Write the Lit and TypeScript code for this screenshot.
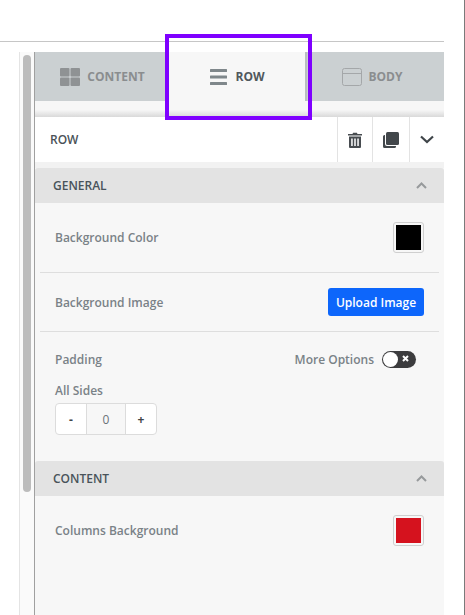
import { LitElement, html, css } from 'lit';
import { customElement } from 'lit/decorators.js';

@customElement('app-root')
export class AppRoot extends LitElement {
  static styles = css`
    :host {
      display: block;
      position: relative;
      width: 465px;
      height: 615px;
      box-sizing: border-box;
      border-right: 1px solid #7a7a7a;
      overflow: hidden;
      background: #fff;
      font-family: "Open Sans", sans-serif;
      font-weight: 600;
      font-size: 12px;
      color: #7a8287;
    }
    .top {
      width: 444px;
      height: 41px;
      border-bottom: 1px solid #c6c6c6;
      margin-bottom: 10px;
      box-sizing: content-box;
    }
    .main {
      display: flex;
      height: 563px;
      width: 444px;
      padding-left: 19px;
      box-sizing: border-box;
    }
    .rail {
      width: 15px;
      flex: none;
      border-left: 1px solid #e4e4e4;
      box-sizing: border-box;
      padding: 3px 0 0 3px;
      background: #fafafa;
    }
    .thumb {
      width: 8px;
      height: 437px;
      background: #bcbcbc;
      border-radius: 4px;
    }
    .panel {
      flex: 1;
      min-width: 0;
      border-left: 1px solid #a0a0a0;
      background: #f7f7f7;
    }
    .tabs {
      display: flex;
      height: 49px;
      background: #cbd0d2;
    }
    .tab {
      display: flex;
      align-items: center;
      justify-content: center;
      gap: 7px;
      font-weight: 700;
      font-size: 12px;
      color: #8a8d8f;
      box-sizing: border-box;
    }
    .tab.content {
      width: 133px;
      padding-left: 2px;
    }
    .tab.active {
      width: 139px;
      padding-left: 2px;
      gap: 8px;
      background: #f7f7f7;
      color: #50585d;
      border-right: 2px solid #b9bec0;
    }
    .tab.body {
      flex: 1;
      padding-right: 7px;
    }
    .strip {
      height: 16px;
      background: linear-gradient(#f7f7f7 55%, #d9d9d9);
    }
    .head {
      display: flex;
      align-items: stretch;
      height: 45px;
      background: #fff;
      color: #4a5257;
      box-sizing: border-box;
    }
    .head-title {
      flex: 1;
      display: flex;
      align-items: center;
      padding-left: 15px;
      font-size: 12px;
    }
    .head-btn {
      display: flex;
      align-items: center;
      justify-content: center;
      border-left: 1px solid #e3e3e3;
      box-sizing: border-box;
    }
    .head-btn.trash { width: 35px; }
    .head-btn.copy { width: 37px; }
    .head-btn.chev { width: 35px; }
    .gap {
      height: 6px;
      background: #f2f2f2;
    }
    .section {
      display: flex;
      align-items: center;
      justify-content: space-between;
      height: 35px;
      padding: 0 17px 0 18px;
      background: #e3e3e3;
      border-radius: 3px 3px 0 0;
      color: #49535a;
      font-size: 12px;
      box-sizing: border-box;
    }
    .section.tight { padding-bottom: 1px; }
    .line {
      display: flex;
      align-items: center;
      justify-content: space-between;
      margin: 0 5px 0 5px;
      padding: 0 15px 0 15px;
      border-bottom: 1px solid #dedede;
      box-sizing: border-box;
    }
    .line.bg { height: 70px; }
    .line.img { height: 59px; }
    .line.last {
      border-bottom: 0;
      height: 69px;
    }
    .swatch {
      width: 31px;
      height: 31px;
      box-sizing: border-box;
      border: 1px solid #cfcfcf;
      border-radius: 3px;
      padding: 2px;
      background: #f7f7f7;
    }
    .swatch div { height: 100%; }
    .upload {
      width: 96px;
      height: 28px;
      background: #0d66fb;
      color: #fff;
      border-radius: 3px;
      display: flex;
      align-items: center;
      justify-content: center;
      font-size: 12px;
    }
    .padding {
      height: 129px;
      padding: 19px 20px 0 20px;
      box-sizing: border-box;
    }
    .padding-top {
      display: flex;
      align-items: center;
      justify-content: space-between;
      padding-right: 8px;
    }
    .more {
      display: flex;
      align-items: center;
      gap: 8px;
    }
    .toggle {
      position: relative;
      width: 34px;
      height: 17px;
      background: #3c3c3e;
      border-radius: 9px;
    }
    .knob {
      position: absolute;
      left: 1px;
      top: 1px;
      width: 15px;
      height: 15px;
      border-radius: 50%;
      background: #fff;
    }
    .toggle svg {
      position: absolute;
      right: 7px;
      top: 4px;
    }
    .sides { margin-top: 14px; }
    .stepper {
      display: flex;
      width: 102px;
      height: 32px;
      margin-top: 4px;
      background: #fff;
      border: 1px solid #dcdcdc;
      border-radius: 4px;
      box-sizing: border-box;
      color: #3f4549;
      font-weight: 700;
    }
    .stepper div {
      display: flex;
      align-items: center;
      justify-content: center;
    }
    .stepper .minus { width: 30px; }
    .stepper .value {
      width: 40px;
      background: #f7f7f7;
      border-left: 1px solid #dcdcdc;
      border-right: 1px solid #dcdcdc;
      box-sizing: border-box;
      font-weight: 400;
      color: #6b7277;
    }
    .stepper .plus { flex: 1; }
    .highlight {
      position: absolute;
      left: 165px;
      top: 34px;
      width: 147px;
      height: 86px;
      border: 4px solid #7f00ff;
      box-sizing: border-box;
      pointer-events: none;
    }
  `;

  render() {
    return html`
      <div class="top"></div>
      <div class="main">
        <div class="rail"><div class="thumb"></div></div>
        <div class="panel">
          <div class="tabs">
            <div class="tab content">
              <svg width="20" height="18" viewBox="0 0 20 18" fill="#8f9294">
                <rect x="0" y="0" width="9.5" height="8.5" rx="1"></rect>
                <rect x="10.5" y="0" width="9.5" height="8.5" rx="1"></rect>
                <rect x="0" y="9.5" width="9.5" height="8.5" rx="1"></rect>
                <rect x="10.5" y="9.5" width="9.5" height="8.5" rx="1"></rect>
              </svg>
              CONTENT
            </div>
            <div class="tab active">
              <svg width="17" height="16" viewBox="0 0 17 16" fill="#7f878b">
                <rect y="0" width="17" height="3" rx="0.5"></rect>
                <rect y="6.5" width="17" height="3" rx="0.5"></rect>
                <rect y="13" width="17" height="3" rx="0.5"></rect>
              </svg>
              ROW
            </div>
            <div class="tab body">
              <svg width="20" height="18" viewBox="0 0 20 18" fill="none" stroke="#a4a7a9" stroke-width="1">
                <rect x="0.5" y="0.5" width="19" height="17" rx="2"></rect>
                <path d="M0.5 5.5h19"></path>
              </svg>
              BODY
            </div>
          </div>
          <div class="strip"></div>
          <div class="head">
            <div class="head-title">ROW</div>
            <div class="head-btn trash">
              <svg width="14" height="16" viewBox="0 0 14 16" fill="#474c50">
                <path d="M0 2h4.500l.6-1.300h3.800L9.500 2H14v1.500H0z"></path>
                <path fill-rule="evenodd" d="M1 4.500h12V15a1 1 0 0 1-1 1H2a1 1 0 0 1-1-1zM3.200 6.500v7.500h1.500V6.500zM6.250 6.500v7.500h1.500V6.500zM9.300 6.500v7.500h1.500V6.500z"></path>
              </svg>
            </div>
            <div class="head-btn copy">
              <svg width="16" height="16" viewBox="0 0 16 16" fill="#42474b">
                <rect x="3" y="0" width="13" height="13" rx="1.500"></rect>
                <path d="M0 4.500a1.500 1.500 0 0 1 1.500-1.500H2v9a2 2 0 0 0 2 2h9v.5a1.500 1.500 0 0 1-1.500 1.500h-10A1.500 1.500 0 0 1 0 14.500z"></path>
              </svg>
            </div>
            <div class="head-btn chev">
              <svg width="14" height="9" viewBox="0 0 14 9" fill="none" stroke="#3f4549" stroke-width="2.200">
                <path d="M1 1.500l6 5.500 6-5.500"></path>
              </svg>
            </div>
          </div>
          <div class="gap"></div>
          <div class="section">
            GENERAL
            <svg width="11" height="7" viewBox="0 0 11 7" fill="none" stroke="#979a9c" stroke-width="2">
              <path d="M1 6l4.500-4.500L10 6"></path>
            </svg>
          </div>
          <div class="line bg">
            Background Color
            <div class="swatch"><div style="background:#000"></div></div>
          </div>
          <div class="line img">
            Background Image
            <div class="upload">Upload Image</div>
          </div>
          <div class="padding">
            <div class="padding-top">
              Padding
              <div class="more">
                More Options
                <div class="toggle">
                  <div class="knob"></div>
                  <svg width="7" height="7" viewBox="0 0 7 7" stroke="#fff" stroke-width="2">
                    <path d="M1 1l5 5M6 1L1 6"></path>
                  </svg>
                </div>
              </div>
            </div>
            <div class="sides">All Sides</div>
            <div class="stepper">
              <div class="minus">-</div>
              <div class="value">0</div>
              <div class="plus">+</div>
            </div>
          </div>
          <div class="section tight">
            CONTENT
            <svg width="11" height="7" viewBox="0 0 11 7" fill="none" stroke="#979a9c" stroke-width="2">
              <path d="M1 6l4.500-4.500L10 6"></path>
            </svg>
          </div>
          <div class="line last">
            Columns Background
            <div class="swatch"><div style="background:#d5121e"></div></div>
          </div>
        </div>
      </div>
      <div class="highlight"></div>
    `;
  }
}
